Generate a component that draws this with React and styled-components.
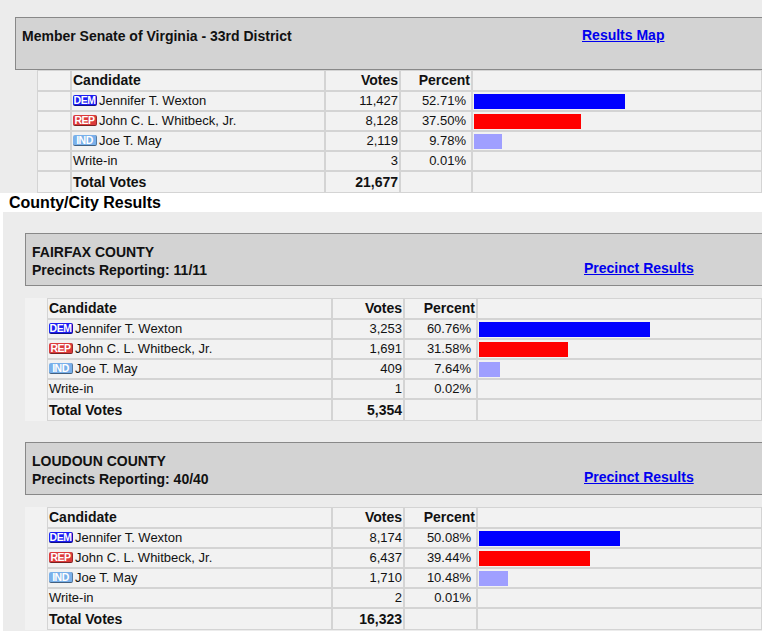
import React from 'react'
import styled, { createGlobalStyle } from 'styled-components'

const GlobalStyle = createGlobalStyle`
  body {
    margin: 0;
    background: #fff;
    font-family: "Liberation Sans", Arial, Helvetica, sans-serif;
    color: #000;
  }
`

const Page = styled.div`
  width: 762px;
`

const Panel = styled.div`
  background: #ececec;
  margin-left: ${p => p.$offset || 0}px;
  padding: ${p => p.$pad};
`

const HeaderBox = styled.div`
  display: grid;
  grid-template-columns: 1fr ${p => p.$linkCol}px;
  align-items: ${p => p.$align || 'start'};
  box-sizing: border-box;
  height: 53px;
  margin-bottom: ${p => p.$gap || 0}px;
  padding: ${p => p.$pad};
  background: #d3d3d3;
  border-top: 1px solid #888;
  border-bottom: 1px solid #888;
  border-left: 1px solid #888;
`

const Title = styled.div`
  font-size: 14px;
  font-weight: bold;
  line-height: 18px;
  color: #111;
`

const Link = styled.a`
  margin-bottom: ${p => p.$lift || 0}px;
  margin-top: ${p => p.$drop || 0}px;
  font-size: 14px;
  font-weight: bold;
  line-height: 18px;
  color: #0000ee;
  text-decoration: underline;
  cursor: pointer;
`

const SectionTitle = styled.div`
  height: 19px;
  padding-left: 9px;
  font-size: 16px;
  font-weight: bold;
  line-height: 19px;
  background: #fff;
`

const Table = styled.table`
  border-collapse: separate;
  border-spacing: 0;
  margin-left: ${p => p.$indent || 0}px;
  width: calc(100% - ${p => p.$indent || 0}px);
  table-layout: fixed;
  background: #f2f2f2;
`

const Cell = styled.td`
  box-sizing: border-box;
  padding: 0 ${p => p.$padRight || 1}px 0 1px;
  border: 1px solid ${p => (p.$blank ? '#f2f2f2' : '#d4d4d4')};
  font-size: ${p => (p.$bold ? 14 : 13)}px;
  font-weight: ${p => (p.$bold ? 'bold' : 'normal')};
  line-height: ${p => p.$lh || 18}px;
  text-align: ${p => p.$align || 'left'};
  white-space: nowrap;
  color: #111;
  vertical-align: middle;
`

const Bar = styled.div`
  height: 15px;
  margin-top: 2px;
  margin-bottom: 1px;
  background: ${p => p.$color};
`

const Badge = styled.span`
  display: inline-block;
  box-sizing: border-box;
  width: 24px;
  height: 11px;
  margin-right: 2px;
  border-radius: 2px;
  border-bottom: 1px solid rgba(0, 0, 0, 0.45);
  border-right: 1px solid rgba(0, 0, 0, 0.3);
  background: ${p => p.$bg};
  color: #fff;
  font-size: 10.5px;
  font-weight: bold;
  line-height: 10px;
  text-align: center;
  vertical-align: -1px;
  letter-spacing: -0.5px;
  overflow: hidden;
`

const parties = {
  DEM: { badge: '#1c1cf2', bar: '#0000ff' },
  REP: { badge: '#dc3b3b', bar: '#ff0000' },
  IND: { badge: '#79b0ea', bar: '#9f9fff' },
}

const names = ['Jennifer T. Wexton', 'John C. L. Whitbeck, Jr.', 'Joe T. May']
const partyOrder = ['DEM', 'REP', 'IND']

function ResultsTable({ data, widths, indent, blankFirst }) {
  const [votes, pcts, writeIn, total] = data
  return (
    <Table $indent={indent}>
      <colgroup>
        {widths.map((w, i) => <col key={i} style={{ width: w }} />)}
      </colgroup>
      <tbody>
        <tr>
          <Cell $blank={blankFirst} />
          <Cell $bold $lh={19}>Candidate</Cell>
          <Cell $bold $lh={19} $align="right">Votes</Cell>
          <Cell $bold $lh={19} $align="right">Percent</Cell>
          <Cell />
        </tr>
        {names.map((name, i) => {
          const party = parties[partyOrder[i]]
          return (
            <tr key={name}>
              <Cell $blank={blankFirst} />
              <Cell><Badge $bg={party.badge}>{partyOrder[i]}</Badge>{name}</Cell>
              <Cell $align="right">{votes[i]}</Cell>
              <Cell $align="right" $padRight={5}>{pcts[i]}%</Cell>
              <Cell><Bar $color={party.bar} style={{ width: pcts[i] + '%' }} /></Cell>
            </tr>
          )
        })}
        <tr>
          <Cell $blank={blankFirst} />
          <Cell>Write-in</Cell>
          <Cell $align="right">{writeIn[0]}</Cell>
          <Cell $align="right" $padRight={5}>{writeIn[1]}%</Cell>
          <Cell />
        </tr>
        <tr>
          <Cell $blank={blankFirst} />
          <Cell $bold $lh={20}>Total Votes</Cell>
          <Cell $bold $lh={20} $align="right">{total}</Cell>
          <Cell />
          <Cell />
        </tr>
      </tbody>
    </Table>
  )
}

const counties = [
  {
    name: 'FAIRFAX COUNTY',
    reporting: '11/11',
    data: [['3,253', '1,691', '409'], ['60.76', '31.58', '7.64'], ['1', '0.02'], '5,354'],
  },
  {
    name: 'LOUDOUN COUNTY',
    reporting: '40/40',
    data: [['8,174', '6,437', '1,710'], ['50.08', '39.44', '10.48'], ['2', '0.01'], '16,323'],
  },
]

export default function App() {
  return (
    <Page>
      <GlobalStyle />
      <Panel $pad="17px 0 0 15px">
        <HeaderBox $linkCol={180} $pad="9px 0 0 6px">
          <Title>Member Senate of Virginia - 33rd District</Title>
          <Link $drop={-1}>Results Map</Link>
        </HeaderBox>
        <ResultsTable
          indent={22}
          widths={[34, 254, 75, 72, 290]}
          data={[['11,427', '8,128', '2,119'], ['52.71', '37.50', '9.78'], ['3', '0.01'], '21,677']}
        />
      </Panel>
      <SectionTitle>County/City Results</SectionTitle>
      <Panel $offset={3} $pad="21px 0 1px 22px">
        {counties.map((c, i) => (
          <React.Fragment key={c.name}>
            <HeaderBox $linkCol={178} $align="end" $pad="9px 0 6px 6px" $gap={12}>
              <Title>{c.name}<br />Precincts Reporting: {c.reporting}</Title>
              <Link $lift={2}>Precinct Results</Link>
            </HeaderBox>
            <ResultsTable
              blankFirst
              widths={[22, 285, 72, 73, 285]}
              data={c.data}
            />
            {i === 0 && <div style={{ height: 21 }} />}
          </React.Fragment>
        ))}
      </Panel>
    </Page>
  )
}
